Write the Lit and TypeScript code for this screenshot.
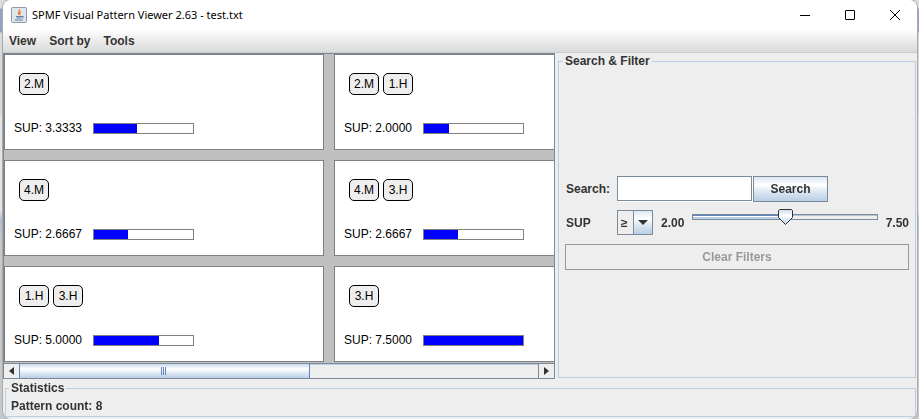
import { LitElement, html, css } from "lit";
import { customElement, property, state } from "lit/decorators.js";

interface Pattern {
  items: string[];
  sup: number;
}

const MIN_SUP = 2;
const MAX_SUP = 7.5;
const BAR_WIDTH = 100;

const PATTERNS: Pattern[] = [
  { items: ["2.M"], sup: 3.3333 },
  { items: ["2.M", "1.H"], sup: 2 },
  { items: ["4.M"], sup: 2.6667 },
  { items: ["4.M", "3.H"], sup: 2.6667 },
  { items: ["1.H", "3.H"], sup: 5 },
  { items: ["3.H"], sup: 7.5 },
];

@customElement("pattern-card")
class PatternCard extends LitElement {
  @property({ attribute: false }) pattern!: Pattern;

  static styles = css`
    :host {
      display: flex;
      flex-direction: column;
      justify-content: space-between;
      box-sizing: border-box;
      height: 96px;
      padding: 18px 9px 14px;
      border: 1px solid #808080;
      background: #fff;
      color: #000;
      font: 12px/14px "Liberation Sans", Arial, sans-serif;
    }
    .items {
      display: flex;
      gap: 4px;
      padding-left: 5px;
    }
    .item {
      box-sizing: border-box;
      width: 30px;
      height: 22px;
      border: 1px solid #000;
      border-radius: 5px;
      background: #eee;
      text-align: center;
      line-height: 21px;
    }
    .measure {
      display: flex;
      align-items: center;
      gap: 10px;
    }
    .value {
      width: 69px;
      white-space: nowrap;
    }
    .bar {
      box-sizing: border-box;
      width: 101px;
      height: 11px;
      border: 1px solid #808080;
    }
    .fill {
      height: 100%;
      background: #00f;
    }
  `;

  render() {
    const { items, sup } = this.pattern;
    const filled = Math.floor((sup / MAX_SUP) * BAR_WIDTH) - 1;
    return html`
      <div class="items">${items.map((i) => html`<span class="item">${i}</span>`)}</div>
      <div class="measure">
        <span class="value">SUP: ${sup.toFixed(4)}</span>
        <div class="bar"><div class="fill" style="width:${filled}px"></div></div>
      </div>
    `;
  }
}

@customElement("app-root")
class AppRoot extends LitElement {
  @state() private threshold = 4.78;

  static styles = css`
    :host {
      display: block;
      box-sizing: border-box;
      min-height: 100vh;
      padding: 0 2px 0 3px;
      background: linear-gradient(#dcdcdc 8px, #8fa3c0 9px 32px, #d9d9d9 33px 115px, #e4e4e4 116px 210px, #b4bfcc 220px, #c8c8c8 245px);
      color: #333;
      font: bold 12px/14px "Liberation Sans", Arial, sans-serif;
    }
    .window {
      display: flex;
      flex-direction: column;
      min-height: 100vh;
      box-sizing: border-box;
      border-radius: 8px;
      background: #eee;
      box-shadow: 0 0 0 1px #aaa;
      overflow: hidden;
    }
    .title {
      display: flex;
      align-items: center;
      height: 29px;
      padding-left: 8px;
      background: #fff;
      color: #000;
    }
    .title h1 {
      flex: 1;
      margin: 0 0 0 5px;
      font: 11px/16px "Segoe UI", "Noto Sans", sans-serif;
    }
    .caption {
      width: 45px;
      height: 28px;
      padding: 0;
      border: 0;
      background: none;
    }
    svg {
      display: block;
      margin: auto;
    }
    .logo {
      margin: 0;
    }
    .menu {
      display: flex;
      gap: 13px;
      height: 23px;
      padding-left: 6px;
      border-bottom: 1px solid #ccc;
      background: linear-gradient(#fff, #dadada);
    }
    .menu button {
      padding: 0;
      border: 0;
      background: none;
      color: #333;
      font: inherit;
    }
    .main {
      display: grid;
      grid-template-columns: minmax(0, 552fr) minmax(0, 362fr);
      flex: 1;
    }
    .scroller {
      box-sizing: border-box;
      border: 1px solid #7a8a99;
      background: #c0c0c0;
      display: flex;
      flex-direction: column;
      overflow: hidden;
    }
    .cards {
      display: grid;
      flex: 1;
      align-content: start;
      grid-template-columns: 320px 320px;
      gap: 10px;
      padding-bottom: 1px;
      overflow: hidden;
    }
    .scrollbar {
      display: flex;
      height: 14px;
      border-top: 1px solid #7a8a99;
      background: #eee;
    }
    .scrollbar button {
      width: 15px;
      padding: 0;
      border: 0;
      background: #eee;
    }
    .track {
      flex: 1;
      border-right: 1px solid #7a8a99;
      box-shadow: inset 0 1px #b8cfe5;
    }
    .thumb {
      box-sizing: border-box;
      display: flex;
      width: 56%;
      height: 14px;
      border: 1px solid #6382bf;
      border-width: 0 1px;
      background: linear-gradient(#c8dae9, #fff 35%, #b8cfe5);
    }
    fieldset {
      box-sizing: border-box;
      min-width: 0;
      margin: 0;
      border: 1px solid #b8cfe5;
    }
    legend {
      margin-left: -2px;
      padding: 0 2px;
    }
    .filter {
      display: flex;
      flex-direction: column;
      margin: 1px 1px 1px 3px;
      padding: 0 6px;
    }
    form {
      display: grid;
      grid-template-columns: 52px minmax(0, 1fr);
      row-gap: 8px;
      margin: auto 0;
      align-items: center;
    }
    .label {
      padding-left: 1px;
    }
    .row {
      display: flex;
      align-items: center;
      height: 26px;
    }
    .query {
      box-sizing: border-box;
      width: 135px;
      height: 25px;
      margin-right: 1px;
      padding: 0 1px;
      border: 1px solid #7a8a99;
      border-radius: 0;
      outline: 0;
      box-shadow: 1px 1px #fff;
      background: #fff;
      font: 12px "Liberation Sans", Arial, sans-serif;
    }
    .search {
      width: 75px;
      height: 26px;
      padding: 0;
      border: 1px solid #7a8a99;
      background: linear-gradient(#dde8f3, #fff 33%, #dde8f3 60%, #b8cfe5);
      color: #333;
      font: inherit;
    }
    .operator {
      position: relative;
      width: 36px;
      height: 25px;
      margin-right: 8px;
    }
    .operator select {
      box-sizing: border-box;
      width: 100%;
      height: 100%;
      padding: 0 0 0 3px;
      border: 1px solid #7a8a99;
      border-radius: 0;
      appearance: none;
      background: linear-gradient(90deg, #eee 15px, #7a8a99 15px 16px, transparent 16px),
        linear-gradient(#dde8f3, #fff 33%, #dde8f3 60%, #b8cfe5);
      color: #333;
      font: bold 12px "Liberation Sans", Arial, sans-serif;
    }
    .operator svg {
      position: absolute;
      right: 5px;
      top: 10px;
      pointer-events: none;
    }
    .slider {
      flex: 1;
      min-width: 0;
      height: 16px;
      margin: 0 8px 12px;
      appearance: none;
      background: none;
    }
    .slider::-webkit-slider-runnable-track {
      box-sizing: border-box;
      height: 6px;
      border: 1px solid #7a8a99;
      background: linear-gradient(#6382bf 1px, #fff 1px 2px, #b8cfe5 2px) 0 0 / var(--at) 100% no-repeat,
        linear-gradient(#b8c4d0 1px, #eee 1px);
    }
    .slider::-webkit-slider-thumb {
      appearance: none;
      width: 15px;
      height: 16px;
      margin-top: -6px;
      background: url("data:image/svg+xml,%3Csvg xmlns='http://www.w3.org/2000/svg' width='15' height='16'%3E%3Cdefs%3E%3ClinearGradient id='g' x2='0' y2='1'%3E%3Cstop stop-color='%23c8dae9'/%3E%3Cstop offset='.4' stop-color='%23fff'/%3E%3Cstop offset='1' stop-color='%23b8cfe5'/%3E%3C/linearGradient%3E%3C/defs%3E%3Cpath d='M1.5.5h12l1 1v7l-7 7-7-7v-7z' fill='url(%23g)' stroke='%23333'/%3E%3C/svg%3E");
    }
    .clear {
      grid-column: 1 / -1;
      height: 26px;
      border: 1px solid #999;
      background: #eee;
      color: #999;
      font: inherit;
    }
    .stats {
      margin: 2px 1px 2px 2px;
      padding: 4px 5px 3px;
    }
    .stats p {
      margin: 0;
    }
  `;

  firstUpdated() {
    this.renderRoot.querySelector<HTMLInputElement>("#query")?.focus();
  }

  private slide(e: Event) {
    this.threshold = Number((e.target as HTMLInputElement).value);
  }

  render() {
    const at = ((this.threshold - MIN_SUP) / (MAX_SUP - MIN_SUP)) * 100;
    return html`
      <div class="window">
        <header class="title">
          <svg class="logo" width="16" height="16" viewBox="0 0 16 16">
            <rect x=".5" y=".5" width="15" height="15" rx="1" fill="#dfe6ec" stroke="#8d9aa8" />
            <path d="M8.500 2c1 2-2.500 2.500-.5 6M10 4.500c-2 1-1.500 2-1 3.500" fill="none" stroke="#e8833a" stroke-width="1.200" />
            <path d="M5 9.500h6M5.500 11h5M4 13h8M11 9.500c2-.5 2 1 0 1.500" fill="none" stroke="#5b82a6" />
          </svg>
          <h1>SPMF Visual Pattern Viewer 2.63 - test.txt</h1>
          <button class="caption" aria-label="Minimize">
            <svg width="10" height="10"><path d="M0 5.500h10" stroke="#000" /></svg>
          </button>
          <button class="caption" aria-label="Maximize">
            <svg width="10" height="10"><rect x=".5" y=".5" width="9" height="9" rx=".5" fill="none" stroke="#000" /></svg>
          </button>
          <button class="caption" aria-label="Close">
            <svg width="10" height="10"><path d="M0 0l10 10M10 0L0 10" stroke="#000" /></svg>
          </button>
        </header>
        <nav class="menu">
          <button>View</button><button>Sort by</button><button>Tools</button>
        </nav>
        <main class="main">
          <section class="scroller">
            <div class="cards">
              ${PATTERNS.map((p) => html`<pattern-card .pattern=${p}></pattern-card>`)}
            </div>
            <div class="scrollbar">
              <button aria-label="Scroll left">
                <svg width="5" height="8"><path d="M5 0v8L0 4z" fill="#333" /></svg>
              </button>
              <div class="track">
                <div class="thumb">
                  <svg width="6" height="8"><path d="M.5 0v8M2.500 0v8M4.500 0v8" stroke="#6382bf" /></svg>
                </div>
              </div>
              <button aria-label="Scroll right">
                <svg width="5" height="8"><path d="M0 0v8l5-4z" fill="#333" /></svg>
              </button>
            </div>
          </section>
          <fieldset class="filter">
            <legend>Search &amp; Filter</legend>
            <form @submit=${(e: Event) => e.preventDefault()}>
              <label class="label" for="query">Search:</label>
              <div class="row">
                <input class="query" id="query" type="text" />
                <button class="search">Search</button>
              </div>
              <label class="label" for="sup">SUP</label>
              <div class="row">
                <div class="operator">
                  <select aria-label="Comparison">
                    <option>≥</option>
                    <option>≤</option>
                  </select>
                  <svg width="10" height="5"><path d="M0 0h10L5 5z" fill="#333" /></svg>
                </div>
                <span>2.00</span>
                <input class="slider" id="sup" type="range" min=${MIN_SUP} max=${MAX_SUP} step="0.01"
                  .value=${String(this.threshold)} style="--at:${at}%" @input=${this.slide} />
                <span>7.50</span>
              </div>
              <button class="clear" type="button" disabled>Clear Filters</button>
            </form>
          </fieldset>
        </main>
        <fieldset class="stats">
          <legend>Statistics</legend>
          <p>Pattern count: 8</p>
        </fieldset>
      </div>
    `;
  }
}
